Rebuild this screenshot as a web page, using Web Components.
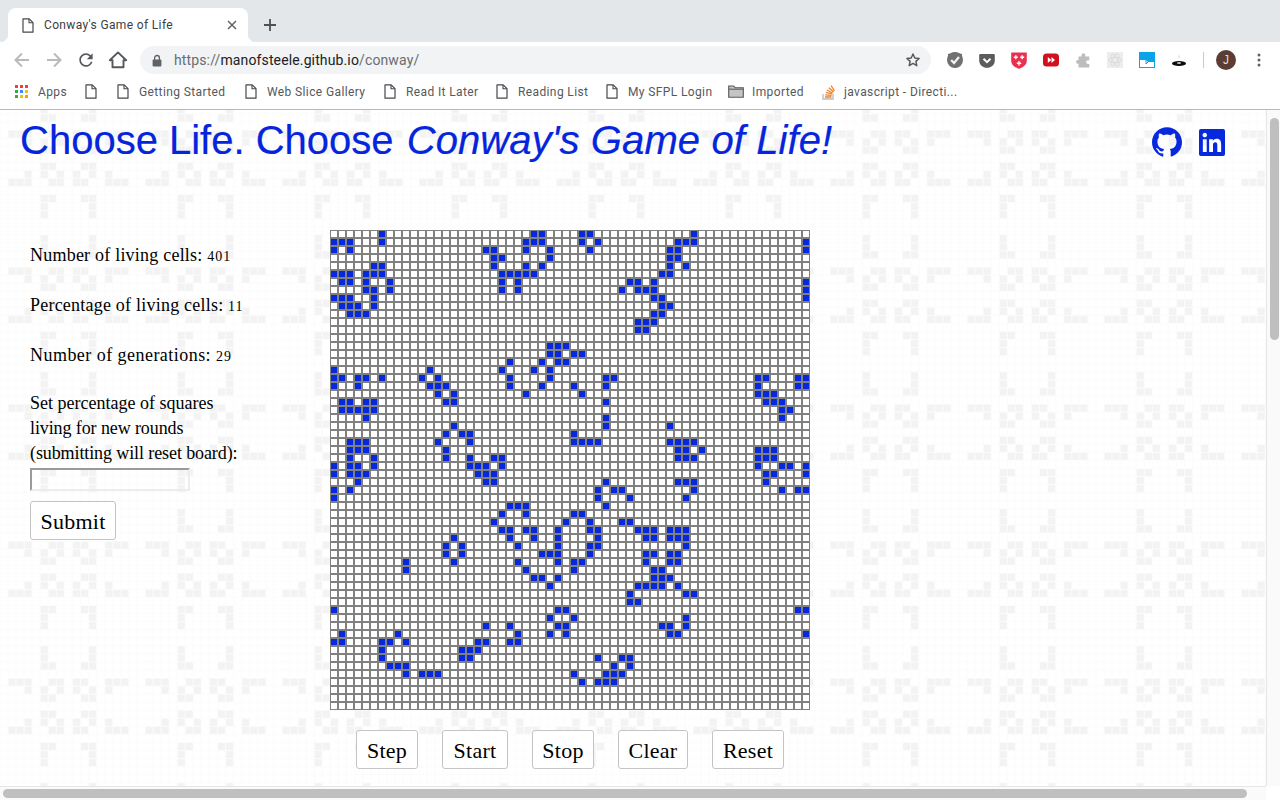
<!DOCTYPE html>
<html lang="en"><head><meta charset="utf-8"><title>Conway's Game of Life</title>
<style>
html,body{margin:0;padding:0;width:1280px;height:800px;overflow:hidden;background:#fff;font-family:"Liberation Sans",Arial,sans-serif}
</style></head><body>
<browser-window>
  <tab-strip slot="chrome"></tab-strip>
  <nav-toolbar slot="chrome"></nav-toolbar>
  <bookmark-bar slot="chrome"></bookmark-bar>
  <life-page>
    <life-header slot="header"></life-header>
    <life-sidebar slot="side"></life-sidebar>
    <life-board slot="board"></life-board>
    <life-button slot="controls" style="width:62px">Step</life-button>
    <life-button slot="controls" style="width:66px">Start</life-button>
    <life-button slot="controls" style="width:62px">Stop</life-button>
    <life-button slot="controls" style="width:70px">Clear</life-button>
    <life-button slot="controls" style="width:72px">Reset</life-button>
  </life-page>
</browser-window>
<script>
const define=(name,html)=>customElements.define(name,class extends HTMLElement{
  constructor(){super();this.attachShadow({mode:'open'}).innerHTML=html;}
});
const FILE=`<svg width="12" height="15" viewBox="0 0 12 15"><path d="M1 .8h6.2L11 4.6v9.6H1z" fill="#fff" stroke="#45484c" stroke-width="1.2" stroke-linejoin="round"/><path d="M7 1v3.8h4" fill="none" stroke="#45484c" stroke-width="1.1"/></svg>`;

define('browser-window',`<style>
:host{display:flex;flex-direction:column;width:1280px;height:800px;overflow:hidden}
.top{display:block;flex:none;height:110px}
.mid{display:flex;flex:none;height:676px}
.page{flex:1;min-width:0;display:flex;overflow:hidden}
.vbar{flex:none;width:14px;box-sizing:border-box;background:#fafafa;border-left:1px solid #e6e6e6;padding:8px 0 0 3px}
.vbar i{display:block;width:9px;height:222px;background:#bfbfbf;border-radius:5px}
.hrow{display:flex;flex:none;height:14px}
.hbar{flex:1;box-sizing:border-box;background:#fafafa;border-top:1px solid #e6e6e6;padding:2px 0 0 3px}
.hbar i{display:block;width:1244px;height:9px;background:#bfbfbf;border-radius:5px}
.corner{flex:none;width:14px;background:#fff}
</style>
<div class="top"><slot name="chrome"></slot></div>
<div class="mid"><div class="page"><slot></slot></div><div class="vbar"><i></i></div></div>
<div class="hrow"><div class="hbar"><i></i></div><div class="corner"></div></div>`);

define('tab-strip',`<style>
:host{display:flex;height:42px;box-sizing:border-box;background:#e4e7ea;padding:8px 0 0 8px;align-items:stretch}
.tab{position:relative;width:240px;background:#fff;border-radius:8px 8px 0 0;display:flex;align-items:center;padding:0 0 0 14px;box-sizing:border-box;color:#3c4043;font:12px "Roboto","Liberation Sans",sans-serif}
.tab::before,.tab::after{content:"";position:absolute;bottom:0;width:8px;height:8px}
.tab::before{left:-8px;background:radial-gradient(circle at 0 0,transparent 8px,#fff 8.5px)}
.tab::after{right:-8px;background:radial-gradient(circle at 100% 0,transparent 8px,#fff 8.5px)}
.t{margin-left:10px;flex:1;letter-spacing:.35px;white-space:nowrap}
.x{margin-right:10px;display:flex}
.plus{margin:0 0 0 15px;display:flex;align-items:center}
</style>
<div class="tab">${FILE}<span class="t">Conway's Game of Life</span><span class="x"><svg width="12" height="12" viewBox="0 0 12 12"><path d="M2 2l8 8M10 2l-8 8" stroke="#5f6368" stroke-width="1.5"/></svg></span></div>
<div class="plus"><svg width="14" height="14" viewBox="0 0 14 14"><path d="M7 1v12M1 7h12" stroke="#4d5054" stroke-width="1.8"/></svg></div>`);

define('nav-toolbar',`<style>
:host{display:flex;align-items:center;height:36px;background:#fff;box-sizing:border-box;padding-left:12px}
.b{width:32px;height:24px;display:flex;align-items:center;justify-content:flex-start;flex:none}
.omni{flex:none;width:791px;height:28px;background:#f1f3f4;border-radius:14px;display:flex;align-items:center;box-sizing:border-box;padding:0 10px 0 12px;font:14px "Roboto","Liberation Sans",sans-serif;color:#6a6d71;letter-spacing:.13px}
.omni svg.l{margin-right:12px;flex:none}
.omni b{font-weight:400;color:#202124}
.u{flex:1;white-space:nowrap}
.exts{display:flex;align-items:center;margin-left:8px}
.e{width:32px;height:24px;display:flex;align-items:center;justify-content:center;flex:none}
.sep{width:1px;height:16px;background:#c8cacc;margin:0 0 0 8px;flex:none}
.av{width:20px;height:20px;border-radius:50%;background:#5b3d33;color:#e7dcd6;font:12px "Liberation Sans",sans-serif;display:flex;align-items:center;justify-content:center;margin-left:12px;flex:none}
.dots{margin-left:21px;display:flex}
</style>
<div class="b"><svg width="20" height="20" viewBox="0 0 20 20"><path d="M17 10H4M10 3.500L3.500 10l6.500 6.500" fill="none" stroke="#b8babc" stroke-width="2"/></svg></div>
<div class="b"><svg width="20" height="20" viewBox="0 0 20 20"><path d="M3 10h13M10 3.500l6.500 6.500-6.500 6.500" fill="none" stroke="#b8babc" stroke-width="2"/></svg></div>
<div class="b"><svg width="20" height="20" viewBox="0 0 24 24"><path fill="#55585c" d="M17.65 6.35A7.958 7.958 0 0 0 12 4c-4.42 0-7.99 3.58-7.99 8s3.57 8 7.99 8c3.73 0 6.84-2.55 7.73-6h-2.08A5.99 5.99 0 0 1 12 18c-3.31 0-6-2.69-6-6s2.69-6 6-6c1.66 0 3.14.69 4.22 1.78L13 11h7V4l-2.35 2.35z"/></svg></div>
<div class="b"><svg width="20" height="20" viewBox="0 0 20 20"><path d="M10 2.400L1.800 10.200h2.700v7h11v-7h2.700z" fill="none" stroke="#55585c" stroke-width="1.900" stroke-linejoin="round"/></svg></div>
<div class="omni"><svg class="l" width="10" height="13" viewBox="0 0 10 13"><path d="M2.600 6V3.900a2.400 2.400 0 0 1 4.800 0V6" fill="none" stroke="#5f6368" stroke-width="1.300"/><rect x=".6" y="5.400" width="8.800" height="7" rx="1" fill="#5f6368"/></svg><span class="u">https://<b>manofsteele.github.io</b>/conway/</span><svg width="16" height="16" viewBox="0 0 24 24"><path d="M12 3l2.700 6 6.500.7-4.900 4.400 1.400 6.400L12 17.200 6.300 20.500l1.400-6.400-4.900-4.400 6.500-.7z" fill="none" stroke="#55585c" stroke-width="2.200" stroke-linejoin="round"/></svg></div>
<div class="exts">
<div class="e"><svg width="16" height="16" viewBox="0 0 16 16"><path d="M8 .2l7 1.800c.4 7-1 12-7 13.800C2 14 .6 9 1 2z" fill="#717171"/><circle cx="8" cy="8" r="8" fill="#717171"/><path d="M4.200 8l2.800 3 5-6" fill="none" stroke="#f4f4f4" stroke-width="2.200"/></svg></div>
<div class="e"><svg width="16" height="15" viewBox="0 0 16 15"><path d="M1.500 1h13c.8 0 1.300.5 1.300 1.300v5.200C15.800 11.800 12.300 14.800 8 14.800S.2 11.800.2 7.500V2.300C.2 1.500.7 1 1.500 1z" fill="#5c5c5c"/><path d="M4.500 5.800L8 9.200l3.500-3.400" fill="none" stroke="#fff" stroke-width="2"/></svg></div>
<div class="e"><svg width="16" height="17" viewBox="0 0 16 17"><path d="M.2.500h15.600v8c0 4.500-3.800 7-7.800 8.200C4 15.500.2 13 .2 8.500z" fill="#e9304f"/><path d="M4.800 3.300v4M2.800 5.300h4M11.200 3.300v4M9.200 5.300h4M8 9v4.500M5.800 11.200h4.400" stroke="#fff" stroke-width="1.400"/></svg></div>
<div class="e"><svg width="16" height="14" viewBox="0 0 16 14"><rect width="16" height="13" y=".5" rx="3.500" fill="#d0101f"/><path d="M4.800 4v6l3.500-3zM8.500 4v6L12 7z" fill="#fff"/></svg></div>
<div class="e"><svg width="15" height="15" viewBox="0 0 15 15"><path d="M5.500 2.200a1.900 1.900 0 0 1 3.800 0V3.500h4v3.700h-1.200a1.900 1.900 0 0 0 0 3.800h1.200v3.400H2.500v-3.700H1.900a1.900 1.900 0 0 1 0-3.800h.6V3.500h3z" fill="#bdbdbd"/></svg></div>
<div class="e"><svg width="16" height="16" viewBox="0 0 16 16"><rect width="16" height="16" fill="#ededed"/><g fill="none" stroke="#dcdcdc" stroke-width="1"><ellipse cx="8" cy="8" rx="6.500" ry="2.600"/><ellipse cx="8" cy="8" rx="6.500" ry="2.600" transform="rotate(60 8 8)"/><ellipse cx="8" cy="8" rx="6.500" ry="2.600" transform="rotate(120 8 8)"/></g></svg></div>
<div class="e"><svg width="16" height="16" viewBox="0 0 16 16"><rect width="16" height="16" fill="#0aa5e8"/><path d="M1 15V8h6l2 2 6 0v5z" fill="#fff"/><path d="M7 8v4M9 10l-2 2" stroke="#0aa5e8" stroke-width="1"/></svg></div>
<div class="e"><svg width="16" height="14" viewBox="0 0 16 14"><ellipse cx="8" cy="10.500" rx="7" ry="2.400" fill="#0c0c0c"/><ellipse cx="8" cy="10" rx="2.200" ry=".8" fill="#fff"/><path d="M7.500 2.500h1v2h-1z" fill="#f0b8c0"/></svg></div>
</div>
<div class="sep"></div><div class="av">J</div>
<div class="dots"><svg width="4" height="14" viewBox="0 0 4 14"><circle cx="2" cy="2" r="1.500" fill="#5f6368"/><circle cx="2" cy="7" r="1.500" fill="#5f6368"/><circle cx="2" cy="12" r="1.500" fill="#5f6368"/></svg></div>`);

define('bookmark-item',`<style>
:host{display:flex;align-items:center;flex:none;height:100%;font:12px "Roboto","Liberation Sans",sans-serif;color:#55585c;letter-spacing:.38px;white-space:nowrap}
.i{display:flex;flex:none}
.s{margin-left:var(--g,10px)}
</style><span class="i"><slot name="icon"></slot></span><span class="s"><slot></slot></span>`);

define('bookmark-bar',`<style>
:host{display:flex;height:32px;box-sizing:border-box;background:#fff;border-bottom:1px solid #b8b9ba;padding:0 0 4px 15px;align-items:center}
</style>
<bookmark-item style="width:70px"><svg slot="icon" width="13" height="13" viewBox="0 0 13 13"><g><rect width="3" height="3" fill="#ea4335"/><rect x="5" width="3" height="3" fill="#ea4335"/><rect x="10" width="3" height="3" fill="#ea4335"/><rect y="5" width="3" height="3" fill="#34a853"/><rect x="5" y="5" width="3" height="3" fill="#4285f4"/><rect x="10" y="5" width="3" height="3" fill="#fbbc05"/><rect y="10" width="3" height="3" fill="#34a853"/><rect x="5" y="10" width="3" height="3" fill="#fbbc05"/><rect x="10" y="10" width="3" height="3" fill="#fb9d05"/></g></svg>Apps</bookmark-item>
<bookmark-item style="width:32px"><span slot="icon" style="display:flex">${FILE}</span></bookmark-item>
<bookmark-item style="width:128px"><span slot="icon" style="display:flex">${FILE}</span>Getting Started</bookmark-item>
<bookmark-item style="width:139px"><span slot="icon" style="display:flex">${FILE}</span>Web Slice Gallery</bookmark-item>
<bookmark-item style="width:112px"><span slot="icon" style="display:flex">${FILE}</span>Read It Later</bookmark-item>
<bookmark-item style="width:110px"><span slot="icon" style="display:flex">${FILE}</span>Reading List</bookmark-item>
<bookmark-item style="width:122px"><span slot="icon" style="display:flex">${FILE}</span>My SFPL Login</bookmark-item>
<bookmark-item style="width:94px;--g:8px"><svg slot="icon" width="16" height="13" viewBox="0 0 16 13"><path d="M.7 1h5l1.600 1.800h8v9.500H.7z" fill="#c4c4c4" stroke="#55585c" stroke-width="1.100"/><path d="M1 4.200h14" stroke="#55585c" stroke-width="1"/></svg>Imported</bookmark-item>
<bookmark-item style="width:140px;--g:9px"><svg slot="icon" width="13" height="16" viewBox="0 0 13 16"><path d="M1 10v5h10v-5" fill="none" stroke="#bcbbbb" stroke-width="1.300"/><path d="M3 13h6.500M3.200 10.800l6.400.6M3.800 8.400l6.300 1.500M5 6l5.700 3M6.800 3.800l4.900 4.100M9 1.500l3.500 5.300" stroke="#f48024" stroke-width="1.300"/></svg>javascript - Directi...</bookmark-item>`);

/* Page backdrop: a faint 17×17 cell tile of pulsars */
const TILE={0:[0,1,2,5,6,8,9,12,13,14],1:[2,4,6,8,10,12],2:[4,5,9,10],4:[4,5,9,10],5:[2,4,6,8,10,12],6:[0,1,2,5,6,8,9,12,13,14],8:[4,5,9,10],9:[4,10],10:[4,10],13:[4,10],14:[4,10],15:[4,5,9,10]};
let tile='';
for(let k=0;k<17;k++){tile+=`<path d="M${8*k} 0v136M0 ${8*k}h136" stroke="#fcfcfc" stroke-width="1"/>`;}
for(const r in TILE)for(const c of TILE[r])tile+=`<rect x="${8*c+.5}" y="${8*r+.5}" width="7" height="7" fill="#f3f3f3"/>`;
const tileSvg=`<svg xmlns="http://www.w3.org/2000/svg" width="137" height="137" viewBox="0 0 136 136"><rect width="136" height="136" fill="#fff"/>${tile}</svg>`;
const tileUrl=`url("data:image/svg+xml,${encodeURIComponent(tileSvg)}")`;

define('life-page',`<style>
:host{display:block;width:1266px;height:676px;flex:none;overflow:hidden;background:#fff ${tileUrl} 8px 20px/137px 137px;font-family:"Liberation Serif","Times New Roman",serif;color:#000}
.main{display:flex}
.col{width:480px;flex:none}
.controls{display:flex;justify-content:center;gap:24px;margin-top:20px}
.side{width:330px;flex:none;box-sizing:border-box;padding-left:30px}
</style>
<slot name="header"></slot>
<div class="main"><div class="side"><slot name="side"></slot></div>
<div class="col"><slot name="board"></slot><div class="controls"><slot name="controls"></slot></div></div></div>`);

define('life-header',`<style>
:host{display:flex;height:120px;box-sizing:border-box;padding:6px 41px 0 20px;justify-content:space-between;align-items:flex-start;color:#0425dc}
h1{margin:0;font:400 40px/49px "Liberation Sans",Arial,sans-serif;white-space:nowrap;-webkit-text-stroke:.2px #0425dc}
em{margin-left:2px;letter-spacing:.1px}
.ic{display:flex;align-items:center;gap:17px;padding-top:11px}
svg{display:block;fill:#0729dd}
</style>
<h1>Choose Life. Choose <em>Conway's Game of Life!</em></h1>
<div class="ic"><svg width="30" height="30" viewBox="0 0 24 24"><path d="M12 .297c-6.630 0-12 5.373-12 12 0 5.303 3.438 9.800 8.205 11.385.6.113.82-.258.82-.577 0-.285-.01-1.040-.015-2.040-3.338.724-4.042-1.610-4.042-1.610C4.422 18.070 3.633 17.700 3.633 17.700c-1.087-.744.084-.729.084-.729 1.205.084 1.838 1.236 1.838 1.236 1.070 1.835 2.809 1.305 3.495.998.108-.776.417-1.305.76-1.605-2.665-.3-5.466-1.332-5.466-5.930 0-1.310.465-2.380 1.235-3.220-.135-.303-.54-1.523.105-3.176 0 0 1.005-.322 3.300 1.230.96-.267 1.980-.399 3-.405 1.020.006 2.040.138 3 .405 2.280-1.552 3.285-1.230 3.285-1.230.645 1.653.24 2.873.12 3.176.765.84 1.230 1.910 1.230 3.220 0 4.610-2.805 5.625-5.475 5.920.42.36.81 1.096.81 2.220 0 1.606-.015 2.896-.015 3.286 0 .315.21.69.825.57C20.565 22.092 24 17.592 24 12.297c0-6.627-5.373-12-12-12"/></svg>
<svg width="26" height="27" viewBox="0 0 24 24" preserveAspectRatio="none"><path d="M20.447 20.452h-3.554v-5.569c0-1.328-.027-3.037-1.852-3.037-1.853 0-2.136 1.445-2.136 2.939v5.667H9.351V9h3.414v1.561h.046c.477-.9 1.637-1.850 3.370-1.850 3.601 0 4.267 2.370 4.267 5.455v6.286zM5.337 7.433c-1.144 0-2.063-.926-2.063-2.065 0-1.138.92-2.063 2.063-2.063 1.140 0 2.064.925 2.064 2.063 0 1.139-.925 2.065-2.064 2.065zm1.782 13.019H3.555V9h3.564v11.452zM22.225 0H1.771C.792 0 0 .774 0 1.729v20.542C0 23.227.792 24 1.771 24h20.451C23.200 24 24 23.227 24 22.271V1.729C24 .774 23.200 0 22.222 0h.003z"/></svg></div>`);

define('life-stat',`<style>
:host{display:block;font-size:18px;line-height:25px;margin:0 0 25px;white-space:nowrap}
.v{font-size:14px;line-height:1;letter-spacing:1px}
</style><slot></slot><span class="v"><slot name="v"></slot></span>`);

define('life-sidebar',`<style>
:host{display:block;padding-top:13px}
.form{font-size:18px;line-height:25px;margin-top:-2px;white-space:nowrap}
.n{letter-spacing:-.1px}
input{display:block;box-sizing:border-box;width:160px;height:23px;margin:2px 0 10px;padding:0;background:transparent;border:2px solid;border-color:#9a9a9a #ececec #ececec #9a9a9a}
</style>
<life-stat style="letter-spacing:.22px">Number of living cells: <span slot="v">401</span></life-stat>
<life-stat style="letter-spacing:.22px">Percentage of living cells: <span slot="v">11</span></life-stat>
<life-stat style="letter-spacing:.46px">Number of generations: <span slot="v">29</span></life-stat>
<div class="form">Set percentage of squares<br><span class="n">living for new rounds</span><br><span class="n">(submitting will reset board):</span></div>
<input type="text" aria-label="Percentage">
<life-button style="width:86px">Submit</life-button>`);

define('life-button',`<style>
:host{display:block;flex:none;height:39px}
button{display:block;width:100%;height:100%;box-sizing:border-box;background:#fff;border:1px solid #c4c4c4;border-radius:3px;padding:2px 0 0;font:22px "Liberation Serif","Times New Roman",serif;letter-spacing:.25px;color:#000}
</style><button><slot></slot></button>`);

const ALIVE={
0:[6,25,26,31,32,45],
1:[0,1,2,6,24,25,26,31,33,43,44,45,59],
2:[0,2,19,20,24,27,32,42,43,59],
3:[20,21,27,42,43],
4:[5,6,20,24,26,42,44],
5:[0,1,2,4,5,6,21,22,23,24,25,41,42],
6:[1,2,4,7,21,23,37,38,40,59],
7:[4,5,7,21,23,36,38,39,40,59],
8:[0,1,2,5,40,41,59],
9:[1,2,3,5,41,42],
10:[2,3,4,40,41],
11:[38,39,40],
12:[38,39],
14:[27,28,29],
15:[27,28,30,31],
16:[22,26,28,29],
17:[0,12,21,25,27],
18:[0,1,3,4,6,11,13,22,27,34,35,53,54,58,59],
19:[0,3,12,13,14,22,26,30,34,53,58,59],
20:[13,15,24,31,53,54,55],
21:[1,2,4,5,14,15,34,54,55,56],
22:[1,2,3,4,5,56,57],
23:[4,34,56],
24:[15,34,42],
25:[14,16,17,30],
26:[2,3,4,13,17,30,31,32,33,42,43,44,45],
27:[2,3,4,14,43,44,46,53,54,55],
28:[2,5,14,17,20,21,43,44,45,53,54,55],
29:[0,2,3,5,17,18,19,21,53,56,57,59],
30:[0,2,3,4,18,19,20,54,55,59],
31:[3,19,20,34,43,44,45,54],
32:[0,2,33,35,36,45,56,58,59],
33:[0,33,37,44],
34:[22,23,24,34],
35:[21,24,30,31],
36:[20,29,32,36,37],
37:[21,22,24,25,28,32,33,38,39,40,42,43,44],
38:[15,22,25,28,33,39,40,42,43,44],
39:[14,16,23,28,32,33,44],
40:[14,16,26,27,28,32,39,40,42,43],
41:[9,15,23,28,30,31,39,42,43],
42:[9,24,30,40,41],
43:[25,26,28,40,41,42],
44:[27,38,39,40,41,43],
45:[37,44,45],
46:[37,38],
47:[0,28,29,58,59],
48:[27,30,44],
49:[19,22,28,29,41,42,44],
50:[1,8,23,27,29,42,43,59],
51:[0,1,6,7,9,18,19,22,23],
52:[6,16,17,18],
53:[6,16,17,33,36,37],
54:[7,8,9,35,37],
55:[9,11,12,13,30,34,35,36],
56:[31,33,34,35]
};
let cells='';
for(let r=0;r<60;r++){const a=new Set(ALIVE[r]||[]);for(let c=0;c<60;c++)cells+=a.has(c)?'<b></b>':'<i></i>';}
define('life-board',`<style>
:host{display:grid;grid-template-columns:repeat(60,8px);grid-auto-rows:8px;width:480px;height:480px}
i,b{display:block;box-sizing:border-box;border:1px solid #808080}
i{background:#fff}
b{background:#0729dd}
</style>${cells}`);
</script>
</body></html>
